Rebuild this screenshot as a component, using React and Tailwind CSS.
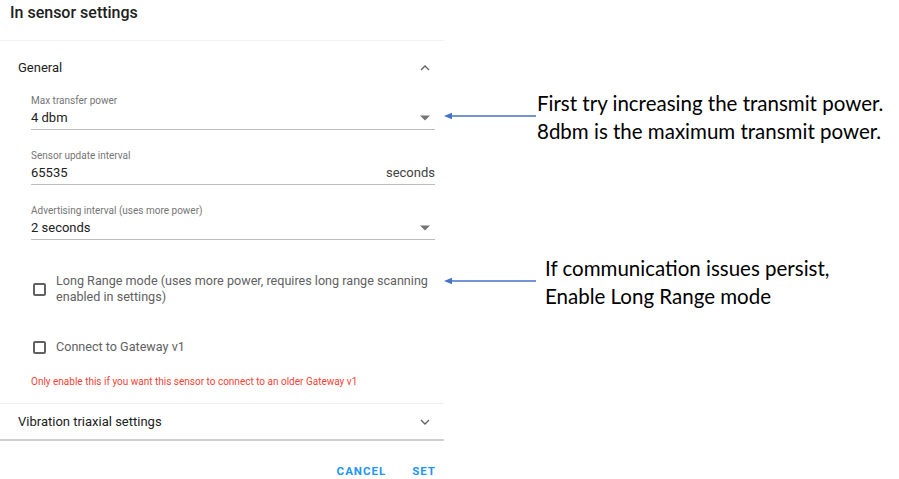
import React from 'react';

const Arrow = ({ className }) => (
  <svg className={className} width="92" height="8" viewBox="0 0 92 8">
    <line x1="6" y1="4" x2="92" y2="4" stroke="#4472c4" strokeWidth="1.5" />
    <path d="M0 4 L8 0.8 L8 7.2 Z" fill="#4472c4" />
  </svg>
);

const Caret = () => (
  <svg width="10" height="6" viewBox="0 0 10 5" className="mr-[5px]">
    <path d="M0 0 L5 5 L10 0 Z" fill="#757575" />
  </svg>
);

const Chevron = ({ up }) => (
  <svg width="10" height="6" viewBox="0 0 10 6" className="mr-[2px]">
    <path
      d={up ? 'M1 5 L5 1 L9 5' : 'M1 1 L5 5 L9 1'}
      fill="none"
      stroke="#616161"
      strokeWidth="1.3"
    />
  </svg>
);

const Field = ({ label, value, suffix, select }) => (
  <div className="border-b border-[#bdbdbd]">
    <div className="text-[10px] leading-[12px] text-[#757575]">{label}</div>
    <div className="flex items-center justify-between h-[22px]">
      <span className="text-[13px] text-[#212121]">{value}</span>
      {suffix && <span className="text-[13px] text-[#424242]">{suffix}</span>}
      {select && <Caret />}
    </div>
  </div>
);

const Check = ({ children }) => (
  <label className="flex items-center gap-[10px] text-[12.6px] leading-[16px] text-[#616161]">
    <span className="w-[13px] h-[13px] border-2 border-[#616161] rounded-[2px] shrink-0 ml-[2px]" />
    <span className="whitespace-nowrap">{children}</span>
  </label>
);

export default function App() {
  return (
    <div className="relative w-[899px] h-[479px] bg-white overflow-hidden" style={{ fontFamily: 'Roboto, "Liberation Sans", sans-serif' }}>
      <div className="w-[444px]">
        <h2 className="px-[10px] h-[40px] pt-[1px] text-[16px] font-medium text-[#212121]">In sensor settings</h2>

        <div className="border-t border-[#f2f2f2] border-b-2 border-b-[#cfcfcf]">
          <div className="flex items-center justify-between h-[54px] pl-[18px] pr-[12px]">
            <span className="text-[13px] text-[#212121]">General</span>
            <Chevron up />
          </div>
          <div className="pl-[31px] pr-[9px] flex flex-col gap-[20px]">
            <Field label="Max transfer power" value="4 dbm" select />
            <Field label="Sensor update interval" value="65535" suffix="seconds" />
            <Field label="Advertising interval (uses more power)" value="2 seconds" select />
          </div>
          <div className="pl-[31px] pr-[9px] pt-[33px]">
            <Check>
              Long Range mode (uses more power, requires long range scanning
              <br />
              enabled in settings)
            </Check>
            <div className="h-[34px]" />
            <Check>Connect to Gateway v1</Check>
            <div className="pt-[20px] pb-[14px] text-[10px] leading-[14px] text-[#f44336]">
              Only enable this if you want this sensor to connect to an older Gateway v1
            </div>
          </div>
          <div className="border-t border-[#eeeeee] flex items-center justify-between h-[36px] pl-[18px] pr-[12px]">
            <span className="text-[13px] text-[#212121]">Vibration triaxial settings</span>
            <Chevron />
          </div>
        </div>

        <div className="flex justify-end gap-[26px] pr-[8px] pt-[24px] text-[11.5px] leading-[13px] font-bold tracking-[1px] text-[#2196f3]">
          <span>CANCEL</span>
          <span>SET</span>
        </div>
      </div>

      <Arrow className="absolute left-[444px] top-[112px]" />
      <div className="absolute left-[537px] top-[89px] text-[20.5px] leading-[28px] text-black" style={{ fontFamily: 'Lato, "Open Sans", sans-serif' }}>
        First try increasing the transmit power.
        <br />
        8dbm is the maximum transmit power.
      </div>

      <Arrow className="absolute left-[444px] top-[277px]" />
      <div className="absolute left-[545px] top-[254px] text-[20.5px] leading-[28px] text-black" style={{ fontFamily: 'Lato, "Open Sans", sans-serif' }}>
        If communication issues persist,
        <br />
        Enable Long Range mode
      </div>
    </div>
  );
}
